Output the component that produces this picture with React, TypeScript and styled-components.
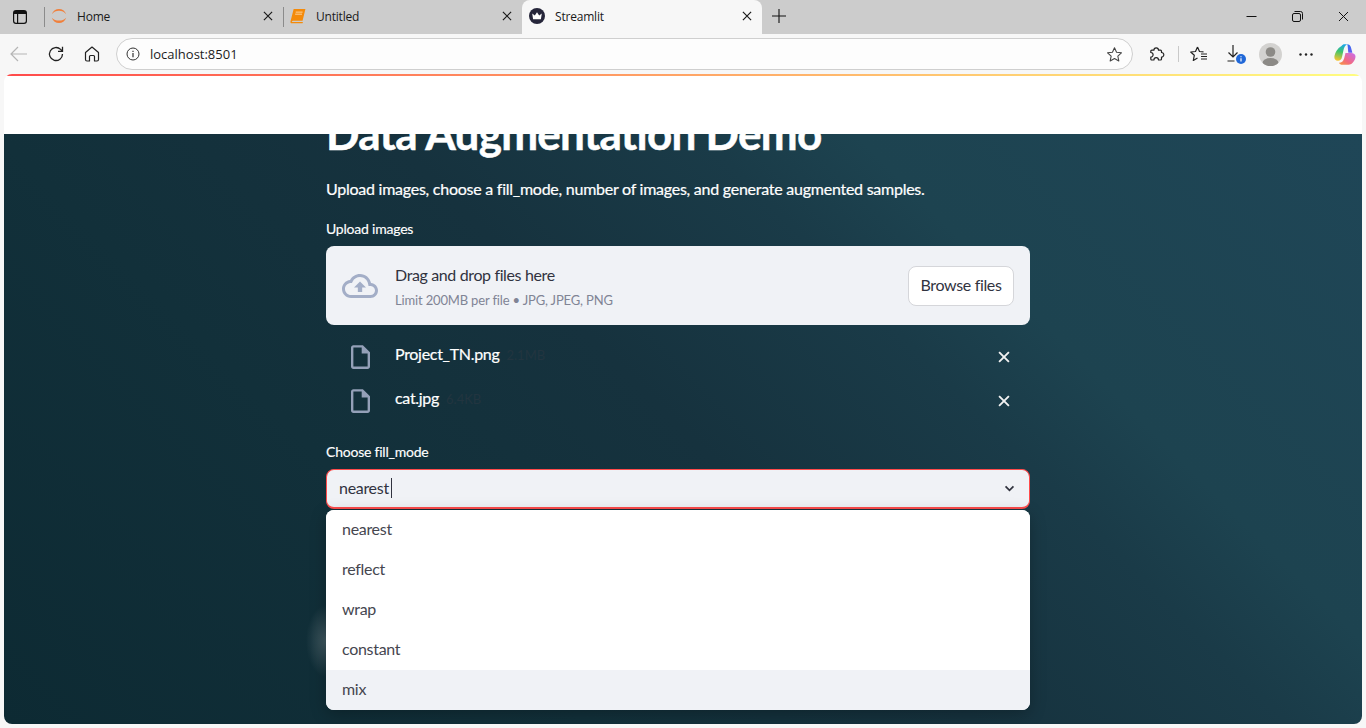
import React from "react";
import styled, { createGlobalStyle } from "styled-components";

const Global = createGlobalStyle`
  html, body { margin: 0; padding: 0; height: 100%; overflow: hidden; background: #f7f7f7; }
  #root { height: 100%; }
  * { box-sizing: border-box; }
`;
const ST = `"Lato", "Noto Sans", sans-serif`;
const UI = `"Open Sans", "Noto Sans", sans-serif`;

const Browser = styled.div`
  width: 1366px; height: 728px; display: flex; flex-direction: column; background: #f7f7f7; overflow: hidden;
`;
const TabStrip = styled.div`
  height: 34px; flex: none; background: #cccccc; display: flex; align-items: flex-start; font: 12px ${UI}; color: #1a1a1a;
`;
const SideBtn = styled.div`
  width: 40px; height: 34px; display: flex; align-items: center; justify-content: center; flex: none;
`;
const Tab = styled.div<{ $active?: boolean; $w: number; $end: number }>`
  width: ${p => p.$w}px; flex: none; display: flex; align-items: center; position: relative;
  height: ${p => (p.$active ? 38 : 32)}px; padding: 0 ${p => p.$end}px ${p => (p.$active ? 6 : 0)}px ${p => (p.$active ? 7 : 6)}px;
  background: ${p => (p.$active ? "#f7f7f7" : "transparent")};
  border-radius: ${p => (p.$active ? "8px 8px 0 0" : "0")};
  z-index: ${p => (p.$active ? 2 : 0)};
`;
const Divider = styled.i<{ $ml?: number }>`
  flex: none; width: 1px; height: 20px; background: #8b8b8b; margin: 7px 0 0 ${p => p.$ml ?? 0}px;
`;
const TabIcon = styled.span`
  width: 16px; height: 16px; flex: none; display: flex; margin-right: 10px;
`;
const TabLabel = styled.span`
  flex: 1; font-size: 12px; white-space: nowrap; overflow: hidden; letter-spacing: -0.2px;
`;
const TabClose = styled.span`
  flex: none; width: 16px; height: 16px; display: flex; align-items: center; justify-content: center;
`;
const NewTab = styled.div`
  width: 34px; height: 32px; display: flex; align-items: center; justify-content: center; flex: none;
`;
const Spacer = styled.div`flex: 1;`;
const WinBtn = styled.div`
  width: 46px; height: 32px; display: flex; align-items: center; justify-content: center; flex: none;
`;
const Toolbar = styled.div`
  height: 40px; flex: none; display: flex; align-items: flex-start; padding-top: 4px; background: #f7f7f7; position: relative; z-index: 1;
`;
const NavBtn = styled.div<{ $w?: number }>`
  width: ${p => p.$w ?? 36}px; height: 32px; flex: none; display: flex; align-items: center; justify-content: center;
`;
const Address = styled.div`
  width: 1017px; height: 32px; flex: none; margin-left: 6px; border: 1px solid #cfcfcf; border-radius: 16px; background: #fdfdfd;
  display: flex; align-items: center; padding: 0 9px; font: 13px ${UI}; color: #1c1c1c;
`;
const AddressText = styled.span`flex: 1; margin-left: 10px;`;
const Sep = styled.i`width: 1px; height: 16px; background: #c9c9c9; flex: none; margin: 8px 0 0 -3px;`;
const Avatar = styled.div`
  width: 23px; height: 23px; border-radius: 50%; background: #d3d2d0; overflow: hidden; display: flex;
`;
const DownloadWrap = styled.span`
  position: relative; display: flex; width: 18px; height: 20px;
`;
const DownloadBadge = styled.svg`
  position: absolute; right: -1px; bottom: 0;
`;
const Viewport = styled.div`
  flex: none; height: 650px; margin: 0 4px; border-radius: 8px; overflow: hidden; position: relative; display: flex; flex-direction: column;
`;
const Rainbow = styled.div`
  height: 2px; flex: none; background: linear-gradient(90deg, #ff4b4b, #fffd80);
  position: relative; z-index: 3;
`;
const Header = styled.div`
  height: 58px; flex: none; background: #fff; position: relative; z-index: 2;
`;
const Scroller = styled.div`
  flex: 1; min-height: 0; overflow: hidden; position: relative;
  background: linear-gradient(45deg, #0d2a33 0%, #12303a 30%, #16323e 50%, #1a3b48 66%, #1d4350 74%, #1f4657 100%);
`;
const Column = styled.div`
  width: 704px; margin: -27px 0 0 322px; font-family: ${ST}; color: #fff; position: relative;
`;
const Title = styled.h1`
  margin: 0; font: 700 44px/52px ${ST}; color: #fff; white-space: nowrap; letter-spacing: -0.72px; -webkit-text-stroke: 0.5px #fff;
`;
const Lead = styled.p`
  margin: 19px 0 0; height: 24px; font: 400 16px/22px ${ST}; color: #fff; white-space: nowrap; letter-spacing: -0.25px; -webkit-text-stroke: 0.2px #fff;
`;
const FieldLabel = styled.div<{ $mt: number }>`
  margin-top: ${p => p.$mt}px; font: 400 14px/18px ${ST}; color: #fff; height: 20px; letter-spacing: -0.22px; -webkit-text-stroke: 0.15px #fff;
`;
const Drop = styled.div`
  margin-top: 6px; height: 79px; border-radius: 8px; background: #f0f2f6; display: flex; align-items: center; padding: 0 16px;
`;
const CloudIcon = styled.span`
  width: 37px; height: 24px; flex: none; display: flex; margin-right: 16px;
`;
const DropText = styled.div`flex: 1; min-width: 0; padding-top: 1px;`;
const DropTitle = styled.div`
  font: 400 16px/20px ${ST}; color: #31333f; letter-spacing: -0.37px;
`;
const DropHint = styled.div`
  margin-top: 7px; font: 400 13px/16px ${ST}; color: #808495; letter-spacing: -0.16px;
`;
const Browse = styled.button`
  width: 106px; height: 40px; background: #fff; border: 1px solid #d5d6da; border-radius: 8px; padding: 0 0 2px;
  font: 400 16px/20px ${ST}; color: #31333f; letter-spacing: -0.35px;
`;
const Files = styled.div`
  margin-top: 12px; display: flex; flex-direction: column; gap: 4px;
`;
const FileRow = styled.div`
  height: 40px; display: flex; align-items: center; padding: 0 16px 0 22px;
`;
const FileIcon = styled.span`
  width: 24px; height: 28px; flex: none; display: flex; align-items: center; justify-content: center; margin-right: 23px;
`;
const FileName = styled.span`
  font: 400 16px/20px ${ST}; color: #fff; margin-top: -6px; letter-spacing: -0.3px; -webkit-text-stroke: 0.2px #fff;
`;
const FileSize = styled.span`
  font: 400 13px/16px ${ST}; color: #223540; margin-left: 7px; flex: 1; margin-top: -5px;
`;
const Remove = styled.span`
  width: 20px; height: 20px; flex: none; display: flex; align-items: center; justify-content: center;
`;
const SelectWrap = styled.div`
  margin-top: 6px; position: relative;
`;
const Select = styled.div`
  height: 40px; border: 1px solid #ff4b4b; border-bottom-width: 2px; border-radius: 8px; background: #f0f2f6;
  display: flex; align-items: center; padding: 0 14px 2px 12px; font: 400 16px/20px ${ST}; color: #31333f; letter-spacing: -0.3px;
`;
const SelectText = styled.span`flex: 1; display: flex; align-items: center;`;
const Caret = styled.i`
  width: 1px; height: 20px; background: #31333f; margin-left: 2px;
`;
const Chevron = styled.svg`
  margin-top: 2px;
`;
const Menu = styled.div`
  position: absolute; left: 0; right: 0; top: 41px; height: 200px; background: #fff; border-radius: 8px; overflow: hidden;
  box-shadow: 0 4px 16px rgba(0,0,0,0.25);
`;
const Option = styled.div<{ $hi?: boolean }>`
  height: 40px; padding: 0 16px 2px; display: flex; align-items: center; letter-spacing: -0.3px;
  font: 400 16px/20px ${ST}; color: #45464f; background: ${p => (p.$hi ? "#f0f2f6" : "#fff")};
`;
const Glow = styled.div`
  position: absolute; left: -20px; top: 136px; width: 40px; height: 72px;
  background: radial-gradient(ellipse closest-side, rgba(255,255,255,0.2), rgba(255,255,255,0));
`;

const X = ({ s = 11, c = "#1a1a1a", w = 1.3 }: { s?: number; c?: string; w?: number }) => (
  <svg width={s} height={s} viewBox="0 0 11 11" fill="none" stroke={c} strokeWidth={w}><path d="M1 1 10 10M10 1 1 10" /></svg>
);
const Crown = () => (
  <svg width="16" height="16" viewBox="0 0 16 16"><circle cx="8" cy="8" r="8" fill="#26263a" /><path d="M3.200 5.400 5.800 7.400 8 4.200l2.200 3.200 2.600-2-.9 5.800H4.100z" fill="#fff" /></svg>
);
const DocIcon = () => (
  <svg width="19" height="24" viewBox="4 2 16 20" fill="#94a0b8">
    <path d="M14 2H6c-1.100 0-2 .9-2 2v16c0 1.100.9 2 2 2h12c1.100 0 2-.9 2-2V8l-6-6zM6 20V4h7v5h5v11H6z" />
  </svg>
);

export default function App() {
  return (
    <Browser>
      <Global />
      <TabStrip>
        <SideBtn>
          <svg width="14" height="14" viewBox="0 0 14 14" fill="none" stroke="#111" strokeWidth="1.2"><rect x=".6" y=".6" width="12.8" height="12.8" rx="2.4" /><path d="M4.600 4v9.400" /><path d="M1 1h12v3H1z" fill="#111" stroke="none" /></svg>
        </SideBtn>
        <Divider $ml={4} />
        <Tab $w={238} $end={7}>
          <TabIcon>
            <svg width="16" height="16" viewBox="0 0 16 16" fill="#f0803c"><path d="M.8 6.300C2 2.800 4.800 1 8 1s6 1.800 7.200 5.300C13.400 3.800 10.800 2.700 8 2.700S2.600 3.800.8 6.300z" /><path d="M.8 9.700C2 13.200 4.800 15 8 15s6-1.800 7.200-5.300C13.400 11.600 10.800 12.600 8 12.600S2.600 11.600.8 9.700z" /></svg>
          </TabIcon>
          <TabLabel>Home</TabLabel>
          <TabClose><X s={10} /></TabClose>
        </Tab>
        <Divider />
        <Tab $w={238} $end={7}>
          <TabIcon>
            <svg width="16" height="16" viewBox="0 0 14 14"><path d="M3.200.8h10.300L11 11.200H3.200c-.9 0-1.500.4-1.600 1h9.700l-.3 1.200H1.500C.6 13.400.2 12.700.4 11.800z" fill="#f48a0a" /><path d="M5 3.600h6M4.500 5.400h6" stroke="#ffd9a8" strokeWidth=".8" /></svg>
          </TabIcon>
          <TabLabel>Untitled</TabLabel>
          <TabClose><X s={10} /></TabClose>
        </Tab>
        <Tab $active $w={240} $end={7}>
          <TabIcon><Crown /></TabIcon>
          <TabLabel>Streamlit</TabLabel>
          <TabClose><X s={10} /></TabClose>
        </Tab>
        <NewTab>
          <svg width="14" height="14" viewBox="0 0 14 14" stroke="#111" strokeWidth="1.1"><path d="M7 0v14M0 7h14" /></svg>
        </NewTab>
        <Spacer />
        <WinBtn><svg width="11" height="11" viewBox="0 0 11 11" stroke="#111"><path d="M.5 5.500h10" /></svg></WinBtn>
        <WinBtn><svg width="11" height="11" viewBox="0 0 11 11" fill="none" stroke="#111"><rect x=".5" y="2.500" width="8" height="8" rx="1.500" /><path d="M2.500.5h6a2 2 0 0 1 2 2v6" /></svg></WinBtn>
        <WinBtn><X s={11} c="#111" w={1} /></WinBtn>
      </TabStrip>
      <Toolbar>
        <NavBtn $w={38}>
          <svg width="18" height="16" viewBox="0 0 18 16" fill="none" stroke="#b5b5b5" strokeWidth="1.2"><path d="M1 8h16M8 1 1 8l7 7" /></svg>
        </NavBtn>
        <NavBtn>
          <svg width="18" height="18" viewBox="0 0 18 18" fill="none" stroke="#222" strokeWidth="1.300"><path d="M15.500 9a6.500 6.500 0 1 1-1.900-4.600L15.500 6.300M15.500 1.800v4.500H11" /></svg>
        </NavBtn>
        <NavBtn>
          <svg width="16" height="16" viewBox="0 0 16 16" fill="none" stroke="#222" strokeWidth="1.200" strokeLinejoin="round"><path d="M1.500 6.500 8 1l6.500 5.500v7a1.500 1.500 0 0 1-1.500 1.500h-2.500V10.500a1 1 0 0 0-1-1h-3a1 1 0 0 0-1 1V15H3a1.500 1.500 0 0 1-1.500-1.500z" /></svg>
        </NavBtn>
        <Address>
          <svg width="14" height="14" viewBox="0 0 14 14" fill="none" stroke="#333" strokeWidth="1"><circle cx="7" cy="7" r="6" /><path d="M7 6v4.200M7 3.700v1.200" strokeWidth="1.200" /></svg>
          <AddressText>localhost:8501</AddressText>
          <svg width="17" height="17" viewBox="0 0 24 24" fill="none" stroke="#444" strokeWidth="1.500" strokeLinejoin="round"><path d="m12 2.500 2.900 6.300 6.900.8-5.100 4.700 1.400 6.800-6.100-3.400-6.100 3.400 1.400-6.800-5.100-4.700 6.900-.8z" /></svg>
        </Address>
        <NavBtn $w={48}>
          <svg width="16" height="16" viewBox="0 0 16 16" fill="none" stroke="#222" strokeWidth="1.200" strokeLinejoin="round"><path d="M2.800 4.200H4.900a2.300 2.300 0 1 1 4.600 0h2a1 1 0 0 1 1 1V6.500a2.300 2.300 0 1 1 0 4.600V13a1 1 0 0 1-1 1H9.500a2.300 2.300 0 0 0-4.600 0H2.800a1 1 0 0 1-1-1V11.100a2.300 2.300 0 0 0 0-4.600V5.200a1 1 0 0 1 1-1z" /></svg>
        </NavBtn>
        <Sep />
        <NavBtn $w={40}>
          <svg width="18" height="16" viewBox="0 0 18 16" fill="none" stroke="#222" strokeWidth="1.200" strokeLinejoin="round"><path d="M7.500 1 9.500 5.500l4 .4M7.500 1 5.500 5.500l-4.800.5 3.600 3.300L3.300 14.500l4.200-2.500" /><path d="M11 8h6M11 10.500h6M11 13h6" /></svg>
        </NavBtn>
        <NavBtn $w={33}>
          <DownloadWrap>
            <svg width="14" height="18" viewBox="0 0 14 18" fill="none" stroke="#222" strokeWidth="1.200"><path d="M6 1v12M1.500 8.500 6 13l4.500-4.500M.5 17h7" /></svg>
            <DownloadBadge width="10" height="10" viewBox="0 0 10 10"><circle cx="5" cy="5" r="5" fill="#2168d8" /><path d="M5 4.300v3.200M5 2.300v1" stroke="#fff" strokeWidth="1.200" /></DownloadBadge>
          </DownloadWrap>
        </NavBtn>
        <NavBtn $w={37}>
          <Avatar>
            <svg width="23" height="23" viewBox="0 0 23 23"><circle cx="11.500" cy="9" r="4.800" fill="#8c8a86" /><ellipse cx="11.500" cy="20" rx="8" ry="5" fill="#8c8a86" /></svg>
          </Avatar>
        </NavBtn>
        <NavBtn $w={34}>
          <svg width="14" height="3" viewBox="0 0 14 3" fill="#222"><circle cx="1.500" cy="1.500" r="1.200" /><circle cx="7" cy="1.500" r="1.200" /><circle cx="12.500" cy="1.500" r="1.200" /></svg>
        </NavBtn>
        <NavBtn $w={44}>
          <svg width="22" height="21" viewBox="0 0 22 21">
            <defs>
              <linearGradient id="cpA" x1="0.6" y1="0" x2="0.4" y2="1"><stop offset="0" stopColor="#1aa7e8" /><stop offset=".45" stopColor="#3fc46a" /><stop offset="1" stopColor="#f4c430" /></linearGradient>
              <linearGradient id="cpB" x1="0.5" y1="0" x2="0.5" y2="1"><stop offset="0" stopColor="#2d6ff0" /><stop offset="1" stopColor="#6a5cf0" /></linearGradient>
              <linearGradient id="cpC" x1="1" y1="0" x2="0" y2="1"><stop offset="0" stopColor="#c86cf0" /><stop offset=".6" stopColor="#f26a80" /><stop offset="1" stopColor="#f79a3a" /></linearGradient>
            </defs>
            <path d="M7.500 2C8.300.8 9.300.3 10.500.3h2.600C11.300 1.300 10 3.500 9.500 6L8 13c-.6 2.500-1.800 3.700-4 3.700-2.500 0-4-1.700-3.600-4.200.5-3.500 3-8.200 7.100-10.500z" fill="url(#cpA)" />
            <path d="M13.100.3c2 0 3.200 1 3.800 3l1.500 5.500h-4.100l-.3-3c-.2-2.500-.2-4.200-.9-5.500z" fill="url(#cpB)" />
            <path d="M8.500 20.700c-1.800 0-2.900-.6-3.500-2 2.700 0 4.300-1.500 5.200-4.500l1.300-5.200h5.500c2.700 0 4.500 1.300 4.500 3.500 0 3.300-3 8.200-7 8.200z" fill="url(#cpC)" />
          </svg>
        </NavBtn>
      </Toolbar>
      <Viewport>
        <Rainbow />
        <Header />
        <Scroller>
          <Column>
            <Title>Data Augmentation Demo</Title>
            <Lead>Upload images, choose a fill_mode, number of images, and generate augmented samples.</Lead>
            <FieldLabel $mt={18}>Upload images</FieldLabel>
            <Drop>
              <CloudIcon>
                <svg width="36" height="24" viewBox="0 4 24 16" preserveAspectRatio="none" fill="#a3aec7"><path d="M19.350 10.040C18.670 6.590 15.640 4 12 4 9.110 4 6.600 5.640 5.350 8.040 2.340 8.360 0 10.910 0 14c0 3.310 2.690 6 6 6h13c2.760 0 5-2.240 5-5 0-2.640-2.050-4.780-4.650-4.960zM19 18H6c-2.210 0-4-1.790-4-4 0-2.050 1.530-3.760 3.560-3.970l1.070-.11.5-.95C8.080 7.140 9.940 6 12 6c2.620 0 4.880 1.860 5.390 4.430l.3 1.500 1.530.11c1.560.1 2.780 1.410 2.780 2.960 0 1.650-1.350 3-3 3zM8 13h2.550v3h2.900v-3H16l-4-4z" /></svg>
              </CloudIcon>
              <DropText>
                <DropTitle>Drag and drop files here</DropTitle>
                <DropHint>Limit 200MB per file • JPG, JPEG, PNG</DropHint>
              </DropText>
              <Browse>Browse files</Browse>
            </Drop>
            <Files>
              <FileRow>
                <FileIcon><DocIcon /></FileIcon>
                <FileName>Project_TN.png</FileName><FileSize>2.1MB</FileSize>
                <Remove><X s={12} c="#f2f2f2" w={1.700} /></Remove>
              </FileRow>
              <FileRow>
                <FileIcon><DocIcon /></FileIcon>
                <FileName>cat.jpg</FileName><FileSize>6.4KB</FileSize>
                <Remove><X s={12} c="#f2f2f2" w={1.700} /></Remove>
              </FileRow>
            </Files>
            <FieldLabel $mt={22}>Choose fill_mode</FieldLabel>
            <SelectWrap>
              <Select>
                <SelectText>nearest<Caret /></SelectText>
                <Chevron width="11" height="7" viewBox="0 0 12 8" fill="none" stroke="#31333f" strokeWidth="2"><path d="m1.500 1.500 4.500 4.500 4.500-4.500" /></Chevron>
              </Select>
              <Glow />
              <Menu>
                <Option>nearest</Option>
                <Option>reflect</Option>
                <Option>wrap</Option>
                <Option>constant</Option>
                <Option $hi>mix</Option>
              </Menu>
            </SelectWrap>
          </Column>
        </Scroller>
      </Viewport>
    </Browser>
  );
}
